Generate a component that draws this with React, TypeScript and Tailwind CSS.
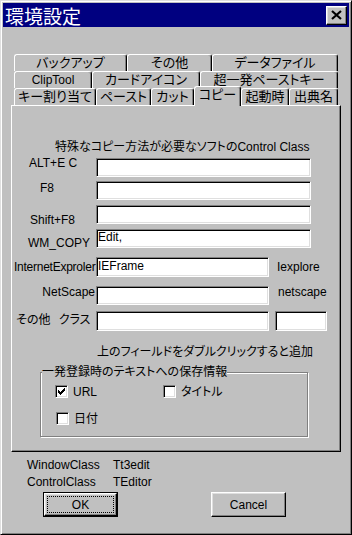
const raised =
  "border border-t-white border-l-white border-r-black border-b-black shadow-[inset_-1px_-1px_#808080,inset_1px_1px_#dfdfdf]";
const sunken =
  "bg-white border border-t-[#808080] border-l-[#808080] border-r-white border-b-white shadow-[inset_1px_1px_#000,inset_-1px_-1px_#dfdfdf]";
const tabBase =
  "h-[17px] shrink-0 flex items-center justify-center whitespace-nowrap border-t border-l border-r border-t-white border-l-white border-r-black rounded-t-[3px] shadow-[inset_-1px_0_#808080] text-[13px] [font-feature-settings:'palt']";

function Tab({ w, children }: { w: string; children: React.ReactNode }) {
  return <div className={`${tabBase} ${w}`}>{children}</div>;
}

function Field({ w, children }: { w: string; children?: React.ReactNode }) {
  return (
    <div className={`h-full shrink-0 ${w} ${sunken} pl-[1px] whitespace-nowrap`}>
      {children}
    </div>
  );
}

function CheckBox({ checked }: { checked?: boolean }) {
  return (
    <div className={`w-[13px] h-[13px] shrink-0 ${sunken} flex items-center justify-center`}>
      {checked && (
        <svg width="7" height="7" viewBox="0 0 7 7" shapeRendering="crispEdges">
          <rect x="6" y="0" width="1" height="1" fill="#000" />
          <rect x="5" y="1" width="2" height="1" fill="#000" />
          <rect x="0" y="2" width="1" height="1" fill="#000" />
          <rect x="4" y="2" width="3" height="1" fill="#000" />
          <rect x="0" y="3" width="2" height="1" fill="#000" />
          <rect x="3" y="3" width="3" height="1" fill="#000" />
          <rect x="0" y="4" width="5" height="1" fill="#000" />
          <rect x="1" y="5" width="3" height="1" fill="#000" />
          <rect x="2" y="6" width="1" height="1" fill="#000" />
        </svg>
      )}
    </div>
  );
}

export default function App() {
  return (
    <div className="w-[352px] h-[535px] overflow-hidden bg-[#c0c0c0] border border-t-[#dfdfdf] border-l-[#dfdfdf] border-r-black border-b-black shadow-[inset_1px_1px_#fff,inset_-1px_-1px_#808080] p-[2px] text-black text-[12px] leading-[14px] font-['Liberation_Sans','Noto_Sans_CJK_JP',sans-serif]">
      {/* title bar */}
      <div className="h-[24px] bg-[#000080] flex items-center justify-between pl-[2px] pr-[2px]">
        <span className="text-white text-[19px] leading-none font-['Noto_Sans_CJK_JP',sans-serif]">
          環境設定
        </span>
        <div className={`w-[21px] h-[19px] bg-[#c0c0c0] ${raised} flex items-center justify-center`}>
          <svg width="11" height="10" viewBox="0 0 11 10">
            <path d="M1 1 L10 9 M10 1 L1 9" stroke="#000" strokeWidth="2.2" />
          </svg>
        </div>
      </div>

      {/* tabs */}
      <div className="mt-[27px] ml-[11px] w-[324px] flex flex-col">
        <div className="flex">
          <Tab w="w-[113px]">バックアップ</Tab>
          <Tab w="w-[85px]">その他</Tab>
          <Tab w="w-[126px]">データファイル</Tab>
        </div>
        <div className="flex">
          <Tab w="w-[78px]">
            <span className="text-[12px]">ClipTool</span>
          </Tab>
          <Tab w="w-[108px]">カードアイコン</Tab>
          <Tab w="w-[138px]">超一発ペーストキー</Tab>
        </div>
        <div className="flex items-end h-[17px]">
          <Tab w="w-[82px]">キー割り当て</Tab>
          <Tab w="w-[55px]">ペースト</Tab>
          <Tab w="w-[43px]">カット</Tab>
          <div className={`${tabBase} w-[47px] relative z-10 !h-[20px] -mb-[1px] bg-[#c0c0c0] pb-[3px]`}>
            コピー
          </div>
          <Tab w="w-[48px]">起動時</Tab>
          <Tab w="w-[49px]">出典名</Tab>
        </div>
      </div>

      {/* panel */}
      <div className="ml-[8px] w-[330px] h-[347px] shrink-0 flex flex-col border border-t-white border-l-white border-r-black border-b-black shadow-[inset_-1px_-1px_#808080]">
        <div className="mt-[34px] ml-[43px] whitespace-nowrap [font-feature-settings:'palt']">
          特殊なコピー方法が必要なソフトのControl Class
        </div>

        <div className="flex mt-[4px] h-[19px] shrink-0">
          <div className="w-[84px] shrink-0 pl-[17px] -mt-[2px] whitespace-nowrap">ALT+E C</div>
          <Field w="w-[215px]" />
        </div>
        <div className="flex mt-[4px] h-[19px] shrink-0">
          <div className="w-[84px] shrink-0 pl-[28px] whitespace-nowrap">F8</div>
          <Field w="w-[215px]" />
        </div>
        <div className="flex mt-[5px] h-[19px] shrink-0">
          <div className="w-[84px] shrink-0 pl-[18px] mt-[8px] whitespace-nowrap">Shift+F8</div>
          <Field w="w-[215px]" />
        </div>
        <div className="flex mt-[5px] h-[19px] shrink-0">
          <div className="w-[84px] shrink-0 pl-[16px] mt-[7px] whitespace-nowrap">WM_COPY</div>
          <Field w="w-[215px]">Edit,</Field>
        </div>
        <div className="flex mt-[9px] h-[20px] shrink-0">
          <div className="w-[84px] shrink-0 pl-[2px] mt-[3px] whitespace-nowrap tracking-[-0.25px]">
            InternetExproler
          </div>
          <Field w="w-[173px]">
            <span className="block pt-[1px]">IEFrame</span>
          </Field>
          <div className="ml-[8px] mt-[3px]">Iexplore</div>
        </div>
        <div className="flex mt-[9px] h-[19px] shrink-0">
          <div className="w-[84px] shrink-0 pr-[1px] -mt-[1px] text-right whitespace-nowrap">NetScape</div>
          <Field w="w-[173px]" />
          <div className="ml-[9px] -mt-[1px]">netscape</div>
        </div>
        <div className="flex mt-[6px] h-[20px] shrink-0">
          <div className="w-[84px] shrink-0 pl-[4px] mt-[2px] whitespace-nowrap [word-spacing:5px] [font-feature-settings:'palt']">
            その他 クラス
          </div>
          <Field w="w-[173px]" />
          <div className="ml-[6px] h-full">
            <Field w="w-[52px]" />
          </div>
        </div>

        <div className="mt-[14px] ml-[85px] whitespace-nowrap [font-feature-settings:'palt']">
          上のフィールドをダブルクリックすると追加
        </div>

        {/* group box */}
        <div className="relative mt-[13px] ml-[28px] w-[268px] h-[65px] shrink-0 border border-[#808080] shadow-[inset_1px_1px_#fff,1px_1px_#fff]">
          <span className="absolute -top-[9px] left-[1px] leading-[16px] bg-[#c0c0c0] whitespace-nowrap [font-feature-settings:'palt']">
            一発登録時のテキストへの保存情報
          </span>
          <div className="flex items-center h-[13px] mt-[12px] pl-[14px]">
            <div className="w-[108px] flex items-center gap-[5px]">
              <CheckBox checked />
              <span>URL</span>
            </div>
            <div className="flex items-center gap-[5px]">
              <CheckBox />
              <span className="[font-feature-settings:'palt']">タイトル</span>
            </div>
          </div>
          <div className="flex items-center h-[13px] mt-[14px] pl-[15px] gap-[5px]">
            <CheckBox />
            <span>日付</span>
          </div>
        </div>
      </div>

      {/* info */}
      <div className="mt-[5px] ml-[24px] grid grid-cols-[86px_auto] leading-[17px]">
        <span>WindowClass</span>
        <span>Tt3edit</span>
        <span>ControlClass</span>
        <span>TEditor</span>
      </div>

      {/* buttons */}
      <div className="flex mt-[1px]">
        <div className="ml-[40px] w-[75px] h-[25px] border border-black">
          <div className={`w-full h-full ${raised} p-[2px]`}>
            <div className="w-full h-full border border-dotted border-black flex items-center justify-center">
              OK
            </div>
          </div>
        </div>
        <div className={`ml-[93px] w-[75px] h-[25px] ${raised} flex items-center justify-center`}>
          Cancel
        </div>
      </div>
    </div>
  );
}
